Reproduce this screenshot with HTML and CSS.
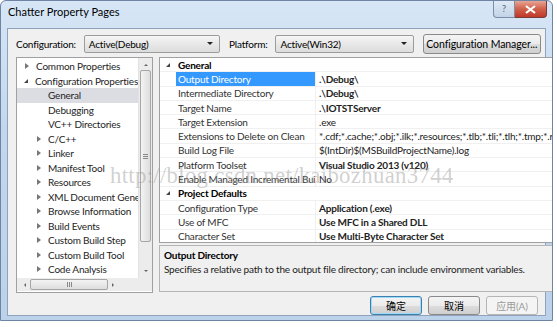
FILE: index.html
```html
<!DOCTYPE html>
<html lang="en">
<head>
    <meta charset="UTF-8">
    <title>Chatter Property Pages</title>
    <link rel="stylesheet" href="styles.css">
</head>
<body>
    <div class="window">
        <div class="titlebar">
            <span class="title">Chatter Property Pages</span>
            <div class="caption-btns">
                <div class="cap-help">?</div>
                <div class="cap-close">
                    <svg width="11" height="9" viewBox="0 0 11 9"><path d="M1 1 L10 8 M10 1 L1 8" stroke="#fff" stroke-width="2.2"/></svg>
                </div>
            </div>
        </div>
        <div class="client">
            <div class="topbar">
                <label class="lbl">Configuration:</label>
                <div class="combo combo-config"><span>Active(Debug)</span><span class="arrow"></span></div>
                <label class="lbl">Platform:</label>
                <div class="combo combo-platform"><span>Active(Win32)</span><span class="arrow"></span></div>
                <button class="btn btn-manager">Configuration Manager...</button>
            </div>

            <div class="main">
                <div class="tree">
                    <div class="tree-body">
                        <ul class="tree-list">
                            <li><span class="tw closed"></span>Common Properties</li>
                            <li><span class="tw open"></span>Configuration Properties</li>
                            <li class="lvl2 selected">General</li>
                            <li class="lvl2">Debugging</li>
                            <li class="lvl2">VC++ Directories</li>
                            <li class="lvl2b"><span class="tw closed"></span>C/C++</li>
                            <li class="lvl2b"><span class="tw closed"></span>Linker</li>
                            <li class="lvl2b"><span class="tw closed"></span>Manifest Tool</li>
                            <li class="lvl2b"><span class="tw closed"></span>Resources</li>
                            <li class="lvl2b"><span class="tw closed"></span>XML Document Generator</li>
                            <li class="lvl2b"><span class="tw closed"></span>Browse Information</li>
                            <li class="lvl2b"><span class="tw closed"></span>Build Events</li>
                            <li class="lvl2b"><span class="tw closed"></span>Custom Build Step</li>
                            <li class="lvl2b"><span class="tw closed"></span>Custom Build Tool</li>
                            <li class="lvl2b"><span class="tw closed"></span>Code Analysis</li>
                        </ul>
                        <div class="vscroll">
                            <span class="sa up"></span>
                            <div class="track"><div class="thumb tree-thumb"><span class="grip"></span></div></div>
                            <span class="sa down"></span>
                        </div>
                    </div>
                    <div class="hscroll">
                        <span class="sa left"></span>
                        <div class="htrack"><div class="hthumb"><span class="hgrip"></span></div></div>
                        <span class="sa right"></span>
                        <span class="corner"></span>
                    </div>
                </div>

                <div class="right">
                    <div class="grid">
                        <div class="rows">
                            <div class="row cat"><span class="tw open"></span>General</div>
                            <div class="row"><span class="name sel">Output Directory</span><span class="val b">.\Debug\<span class="dd"></span></span></div>
                            <div class="row"><span class="name">Intermediate Directory</span><span class="val b">.\Debug\</span></div>
                            <div class="row"><span class="name">Target Name</span><span class="val b">.\IOTSTServer</span></div>
                            <div class="row"><span class="name">Target Extension</span><span class="val">.exe</span></div>
                            <div class="row"><span class="name">Extensions to Delete on Clean</span><span class="val">*.cdf;*.cache;*.obj;*.ilk;*.resources;*.tlb;*.tli;*.tlh;*.tmp;*.rsp;*.pgc</span></div>
                            <div class="row"><span class="name">Build Log File</span><span class="val">$(IntDir)$(MSBuildProjectName).log</span></div>
                            <div class="row"><span class="name">Platform Toolset</span><span class="val b">Visual Studio 2013 (v120)</span></div>
                            <div class="row"><span class="name">Enable Managed Incremental Build</span><span class="val">No</span></div>
                            <div class="row cat"><span class="tw open"></span>Project Defaults</div>
                            <div class="row"><span class="name">Configuration Type</span><span class="val b">Application (.exe)</span></div>
                            <div class="row"><span class="name">Use of MFC</span><span class="val b">Use MFC in a Shared DLL</span></div>
                            <div class="row"><span class="name">Character Set</span><span class="val b">Use Multi-Byte Character Set</span></div>
                            <div class="row"><span class="name">Common Language Runtime Support</span><span class="val">No Common Language Runtime Support</span></div>
                        </div>
                        <div class="vscroll">
                            <span class="sa up"></span>
                            <div class="track"><div class="thumb grid-thumb"><span class="grip"></span></div></div>
                            <span class="sa down"></span>
                        </div>
                    </div>
                    <div class="desc">
                        <div class="desc-title">Output Directory</div>
                        <div class="desc-text">Specifies a relative path to the output file directory; can include environment variables.</div>
                    </div>
                </div>
            </div>

            <div class="footer">
                <button class="btn btn-ok">确定</button>
                <button class="btn">取消</button>
                <button class="btn disabled">应用(A)</button>
            </div>
        </div>
        <div class="watermark">http://blog.csdn.net/kaibozhuan3744</div>
    </div>
</body>
</html>
```

FILE: styles.css
```css
body {
    margin: 0;
    background: #fff;
    font-family: Lato, "Noto Sans CJK SC", sans-serif;
    font-size: 10px;
    letter-spacing: -0.2px;
    color: #000;
}
.window {
    position: relative;
    width: 553px;
    height: 321px;
    border: 1px solid #6d85a3;
    border-radius: 6px 6px 0 0;
    background: linear-gradient(to bottom, #d7e6f6 0%, #c2d7ee 40%, #bcd2eb 100%);
    padding: 0 6px 6px 6px;
    box-sizing: border-box;
    display: flex;
    flex-direction: column;
    overflow: hidden;
}
.titlebar {
    height: 27px;
    display: flex;
    align-items: flex-start;
    justify-content: space-between;
    flex: none;
}
.title {
    margin: 4px 0 0 1px;
    font-size: 11px;
    letter-spacing: 0;
}
.caption-btns {
    display: flex;
    margin-right: -1px;
}
.cap-help {
    width: 20px;
    height: 16px;
    border: 1px solid #7a8ea8;
    border-top: none;
    border-radius: 0 0 0 4px;
    background: linear-gradient(to bottom, #dfe9f5, #c3d3e7);
    color: #5d6f88;
    font-size: 10px;
    text-align: center;
    line-height: 15px;
}
.cap-close {
    width: 31px;
    height: 16px;
    border: 1px solid #7a3b34;
    border-top: none;
    border-left: none;
    border-radius: 0 0 4px 0;
    background: linear-gradient(to bottom, #e8a493, #d0614b 50%, #c0382a);
    display: flex;
    align-items: center;
    justify-content: center;
}
.client {
    flex: 1;
    background: #f0f0f0;
    border: 1px solid #8fa3bd;
    padding: 4px 4px 0 8px;
    display: flex;
    flex-direction: column;
}
.topbar {
    display: flex;
    align-items: center;
    height: 21px;
}
.lbl {
    margin-right: 8px;
}
.combo {
    height: 18px;
    box-sizing: border-box;
    border: 1px solid #9c9c9c;
    border-radius: 2px;
    background: linear-gradient(to bottom, #f6f6f6, #e8e8e8 50%, #dcdcdc);
    display: flex;
    align-items: center;
    justify-content: space-between;
    padding: 0 6px 0 4px;
}
.combo-config {
    width: 137px;
    margin-right: 9px;
}
.combo-platform {
    width: 139px;
    margin-right: 9px;
}
.arrow {
    width: 0;
    height: 0;
    border-left: 3px solid transparent;
    border-right: 3px solid transparent;
    border-top: 3px solid #222;
}
.btn {
    font-family: inherit;
    font-size: 10.5px;
    letter-spacing: -0.1px;
    height: 20px;
    border: 1px solid #8a8a8a;
    border-radius: 3px;
    background: linear-gradient(to bottom, #f4f4f4, #ebebeb 50%, #dddddd 51%, #cfcfcf);
    padding: 0;
    color: #000;
    white-space: nowrap;
}
.btn-manager {
    width: 119px;
}
.main {
    display: flex;
    margin-top: 3px;
    height: 236px;
    gap: 6px;
    margin-right: 3px;
}
.tree {
    width: 137px;
    box-sizing: border-box;
    border: 1px solid #a0a0a0;
    background: #fff;
    display: flex;
    flex-direction: column;
}
.tree-body {
    flex: 1;
    display: flex;
    overflow: hidden;
}
.tree-list {
    list-style: none;
    margin: 0;
    padding: 0;
    flex: 1;
    overflow: hidden;
    white-space: nowrap;
    padding-top: 1px;
    font-size: 10px;
}
.tree-list li {
    height: 14.5px;
    line-height: 14.5px;
    padding-left: 7px;
    display: flex;
    align-items: center;
    color: #1e1e1e;
}
.tree-list li.lvl2 {
    padding-left: 31px;
}
.tree-list li.lvl2b {
    padding-left: 19px;
}
.tree-list li.selected {
    background: #dcdde3;
}
.tw {
    display: inline-block;
    width: 0;
    height: 0;
    margin-right: 7px;
    flex: none;
}
.tw.closed {
    border-top: 3px solid transparent;
    border-bottom: 3px solid transparent;
    border-left: 4px solid #777;
    margin-left: 1px;
}
.tw.open {
    border-left: 4px solid transparent;
    border-bottom: 4px solid #444;
}
.vscroll {
    width: 13px;
    flex: none;
    background: #ececec;
    border-left: 1px solid #e2e2e2;
    display: flex;
    flex-direction: column;
    align-items: center;
}
.sa {
    display: block;
    width: 0;
    height: 0;
    flex: none;
}
.sa.up {
    margin: 6px 0 4px;
    border-left: 2px solid transparent;
    border-right: 2px solid transparent;
    border-bottom: 2px solid #666;
}
.sa.down {
    margin: 4px 0 6px;
    border-left: 2px solid transparent;
    border-right: 2px solid transparent;
    border-top: 2px solid #666;
}
.track {
    flex: 1;
    width: 100%;
    position: relative;
}
.thumb {
    margin: 0 1px;
    border: 1px solid #a6a6a6;
    border-radius: 2px;
    background: linear-gradient(to right, #f3f3f3, #dedede);
    display: flex;
    align-items: center;
    justify-content: center;
}
.tree-thumb {
    margin-top: 0;
    height: 170px;
}
.grid-thumb {
    margin-top: 0;
    height: 126px;
}
.grip {
    width: 5px;
    height: 5px;
    background: repeating-linear-gradient(to bottom, #888 0, #888 1px, transparent 1px, transparent 2px);
}
.hscroll {
    height: 13px;
    flex: none;
    background: #ececec;
    display: flex;
    align-items: center;
    margin-bottom: 1px;
}
.sa.left {
    margin: 0 4px 0 7px;
    border-top: 2px solid transparent;
    border-bottom: 2px solid transparent;
    border-right: 2px solid #666;
}
.sa.right {
    margin: 0 7px 0 4px;
    border-top: 2px solid transparent;
    border-bottom: 2px solid transparent;
    border-left: 2px solid #666;
}
.htrack {
    flex: 1;
    height: 11px;
}
.hthumb {
    width: 78px;
    height: 11px;
    box-sizing: border-box;
    border: 1px solid #a6a6a6;
    border-radius: 2px;
    background: linear-gradient(to bottom, #f3f3f3, #dedede);
    display: flex;
    align-items: center;
    justify-content: center;
}
.hgrip {
    width: 5px;
    height: 5px;
    background: repeating-linear-gradient(to right, #888 0, #888 1px, transparent 1px, transparent 2px);
}
.corner {
    width: 12px;
}
.right {
    flex: 1;
    display: flex;
    flex-direction: column;
    gap: 2px;
}
.grid {
    height: 186px;
    box-sizing: border-box;
    border: 1px solid #a0a0a0;
    background: #fff;
    display: flex;
}
.rows {
    flex: 1;
    overflow: hidden;
}
.row {
    height: 14.3px;
    box-sizing: border-box;
    border-bottom: 1px solid #f0f0f0;
    display: flex;
    align-items: center;
    white-space: nowrap;
    padding-left: 16px;
    color: #222;
}
.row.cat {
    font-weight: bold;
    padding-left: 6px;
    color: #000;
    background: #fff;
}
.row.cat .tw {
    margin-right: 8px;
}
.name {
    width: 140px;
    height: 100%;
    padding-left: 2px;
    box-sizing: border-box;
    overflow: hidden;
    border-right: 1px solid #f0f0f0;
    display: flex;
    align-items: center;
    color: #333;
}
.name.sel {
    background: #3399ff;
    color: #fff;
}
.val {
    flex: 1;
    padding-left: 3px;
    overflow: hidden;
    position: relative;
    height: 100%;
    display: flex;
    align-items: center;
}
.val.b {
    font-weight: bold;
}
.dd {
    position: absolute;
    right: 1px;
    top: 2px;
    width: 10px;
    height: 9px;
    box-sizing: border-box;
    border: 1px solid #8a8a8a;
    background: #f0f0f0;
}
.dd::after {
    content: "";
    position: absolute;
    left: 2px;
    top: 3px;
    border-left: 2px solid transparent;
    border-right: 2px solid transparent;
    border-top: 2px solid #222;
}
.desc {
    flex: 1;
    border: 1px solid #b5b5b5;
    background: #f0f0f0;
    padding: 1px 4px;
    margin-bottom: 1px;
}
.desc-title {
    font-weight: bold;
    line-height: 14px;
    margin-top: 1px;
}
.desc-text {
    line-height: 14px;
    color: #222;
    white-space: nowrap;
}
.footer {
    display: flex;
    justify-content: flex-end;
    gap: 6px;
    margin-top: 3px;
    padding-right: 3px;
}
.footer .btn {
    width: 52px;
    height: 19px;
    font-size: 10px;
}
.btn-ok {
    border-color: #3c7fb1;
    box-shadow: inset 0 0 0 1px #9fdbf7;
}
.btn.disabled {
    color: #9a9a9a;
    border-color: #b5b5b5;
    background: #f4f4f4;
}
.watermark {
    position: absolute;
    left: 109px;
    top: 162px;
    font-family: "Liberation Serif", serif;
    font-size: 22.8px;
    color: rgba(150, 150, 150, 0.45);
    letter-spacing: 0.3px;
    pointer-events: none;
    white-space: nowrap;
}
```
